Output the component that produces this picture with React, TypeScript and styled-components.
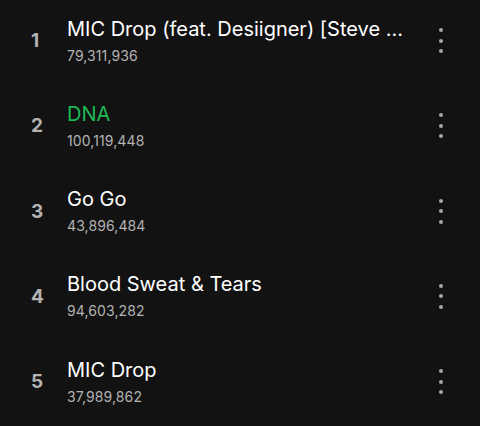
import React from "react";
import styled, { createGlobalStyle } from "styled-components";

interface Track {
  title: string;
  plays: string;
  active?: boolean;
}

const tracks: Track[] = [
  { title: "MIC Drop (feat. Desiigner) [Steve ...", plays: "79,311,936" },
  { title: "DNA", plays: "100,119,448", active: true },
  { title: "Go Go", plays: "43,896,484" },
  { title: "Blood Sweat & Tears", plays: "94,603,282" },
  { title: "MIC Drop", plays: "37,989,862" },
];

const App: React.FC = () => {
  return (
    <>
      <GlobalStyle />
      <List>
        {tracks.map((track, i) => (
          <Row key={track.title}>
            <Rank>{i + 1}</Rank>
            <Info>
              <Title $active={track.active}>{track.title}</Title>
              <Plays>{track.plays}</Plays>
            </Info>
            <MoreButton aria-label="More options">
              <Dot />
              <Dot />
              <Dot />
            </MoreButton>
          </Row>
        ))}
      </List>
    </>
  );
};

export default App;

const GlobalStyle = createGlobalStyle`
  html, body {
    margin: 0;
    padding: 0;
    background: #121212;
  }
  body {
    font-family: Inter, "Noto Sans", sans-serif;
    color: #ffffff;
  }
`;

const List = styled.ol`
  list-style: none;
  margin: 0;
  padding: 0;
  width: 480px;
  height: 426px;
  overflow: hidden;
  background: #121212;
`;

const Row = styled.li`
  display: flex;
  align-items: center;
  height: 85.25px;
  padding: 0 30px 0 30px;
  box-sizing: border-box;
  margin-top: -2px;
  margin-bottom: 2px;
`;

const Rank = styled.span`
  width: 36px;
  flex-shrink: 0;
  padding-left: 1px;
  font-size: 19px;
  font-weight: 700;
  color: #b3b3b3;
`;

const Info = styled.div`
  flex: 1;
  min-width: 0;
  display: flex;
  flex-direction: column;
  gap: 6px;
`;

const Title = styled.span<{ $active?: boolean }>`
  font-size: 20px;
  line-height: 24px;
  color: ${(p) => (p.$active ? "#1db954" : "#ffffff")};
  white-space: nowrap;
  overflow: hidden;
`;

const Plays = styled.span`
  font-size: 14px;
  line-height: 18px;
  color: #b3b3b3;
  letter-spacing: 0.1px;
`;

const MoreButton = styled.button`
  display: flex;
  flex-direction: column;
  align-items: center;
  gap: 6.5px;
  width: 24px;
  margin-left: 12px;
  margin-right: -3px;
  padding: 0;
  background: none;
  border: none;
  cursor: pointer;
`;

const Dot = styled.span`
  width: 4px;
  height: 4px;
  border-radius: 50%;
  background: #a7a7a7;
`;
